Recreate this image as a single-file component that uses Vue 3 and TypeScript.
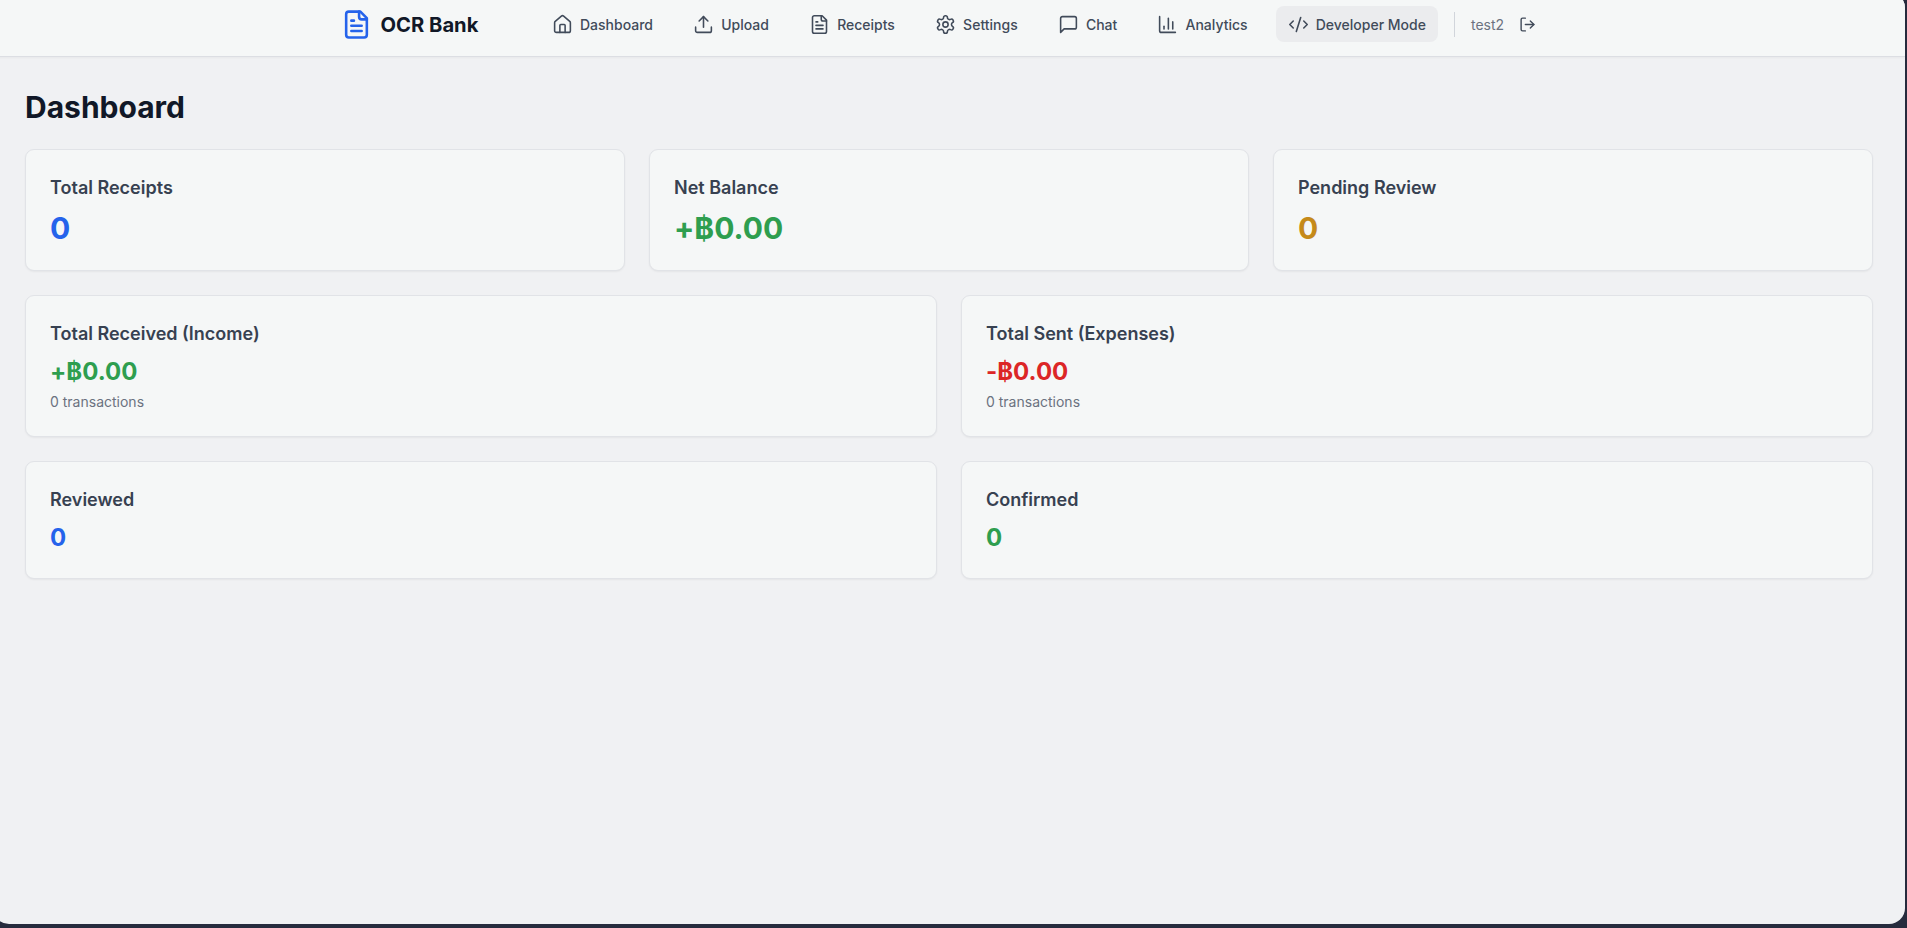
<script setup lang="ts">
interface NavItem {
  label: string
  icon: string[]
  active?: boolean
}

interface Stat {
  label: string
  value: string
  tone: 'blue' | 'green' | 'amber' | 'red'
  note?: string
}

const doc = [
  'M15 2H6a2 2 0 0 0-2 2v16a2 2 0 0 0 2 2h12a2 2 0 0 0 2-2V7Z',
  'M14 2v4a2 2 0 0 0 2 2h4',
  'M10 9H8',
  'M16 13H8',
  'M16 17H8',
]

const navItems: NavItem[] = [
  {
    label: 'Dashboard',
    icon: [
      'M15 21v-8a1 1 0 0 0-1-1h-4a1 1 0 0 0-1 1v8',
      'M3 10a2 2 0 0 1 .709-1.528l7-5.999a2 2 0 0 1 2.582 0l7 5.999A2 2 0 0 1 21 10v9a2 2 0 0 1-2 2H5a2 2 0 0 1-2-2z',
    ],
  },
  { label: 'Upload', icon: ['M12 3v12', 'm17 8-5-5-5 5', 'M21 15v4a2 2 0 0 1-2 2H5a2 2 0 0 1-2-2v-4'] },
  { label: 'Receipts', icon: doc },
  {
    label: 'Settings',
    icon: [
      'M12.22 2h-.44a2 2 0 0 0-2 2v.18a2 2 0 0 1-1 1.73l-.43.25a2 2 0 0 1-2 0l-.15-.08a2 2 0 0 0-2.73.73l-.22.38a2 2 0 0 0 .73 2.73l.15.1a2 2 0 0 1 1 1.72v.51a2 2 0 0 1-1 1.74l-.15.09a2 2 0 0 0-.73 2.73l.22.38a2 2 0 0 0 2.73.73l.15-.08a2 2 0 0 1 2 0l.43.25a2 2 0 0 1 1 1.73V20a2 2 0 0 0 2 2h.44a2 2 0 0 0 2-2v-.18a2 2 0 0 1 1-1.73l.43-.25a2 2 0 0 1 2 0l.15.08a2 2 0 0 0 2.73-.73l.22-.39a2 2 0 0 0-.73-2.73l-.15-.08a2 2 0 0 1-1-1.74v-.5a2 2 0 0 1 1-1.74l.15-.09a2 2 0 0 0 .73-2.73l-.22-.38a2 2 0 0 0-2.73-.73l-.15.08a2 2 0 0 1-2 0l-.43-.25a2 2 0 0 1-1-1.73V4a2 2 0 0 0-2-2z',
      'M15 12a3 3 0 1 1-6 0 3 3 0 0 1 6 0z',
    ],
  },
  { label: 'Chat', icon: ['M21 15a2 2 0 0 1-2 2H7l-4 4V5a2 2 0 0 1 2-2h14a2 2 0 0 1 2 2z'] },
  { label: 'Analytics', icon: ['M3 3v16a2 2 0 0 0 2 2h16', 'M18 17V9', 'M13 17V5', 'M8 17v-3'] },
  { label: 'Developer Mode', icon: ['m18 16 4-4-4-4', 'm6 8-4 4 4 4', 'm14.5 4-5 16'], active: true },
]

const topStats: Stat[] = [
  { label: 'Total Receipts', value: '0', tone: 'blue' },
  { label: 'Net Balance', value: '+฿0.00', tone: 'green' },
  { label: 'Pending Review', value: '0', tone: 'amber' },
]

const midStats: Stat[] = [
  { label: 'Total Received (Income)', value: '+฿0.00', tone: 'green', note: '0 transactions' },
  { label: 'Total Sent (Expenses)', value: '-฿0.00', tone: 'red', note: '0 transactions' },
]

const lowStats: Stat[] = [
  { label: 'Reviewed', value: '0', tone: 'blue' },
  { label: 'Confirmed', value: '0', tone: 'green' },
]
</script>

<template>
  <div class="window">
    <header class="topbar">
      <div class="topbar-inner">
        <div class="brand">
          <svg class="brand-icon" viewBox="0 0 24 24" fill="none" stroke="currentColor" stroke-width="2" stroke-linecap="round" stroke-linejoin="round">
            <path v-for="d in doc" :key="d" :d="d" />
          </svg>
          <span>OCR Bank</span>
        </div>
        <nav class="nav">
          <a v-for="item in navItems" :key="item.label" class="nav-link" :class="{ active: item.active }">
            <svg class="nav-icon" viewBox="0 0 24 24" fill="none" stroke="currentColor" stroke-width="1.8" stroke-linecap="round" stroke-linejoin="round">
              <path v-for="d in item.icon" :key="d" :d="d" />
            </svg>
            {{ item.label }}
          </a>
        </nav>
        <div class="user">
          <span class="username">test2</span>
          <svg class="logout" viewBox="0 0 24 24" fill="none" stroke="currentColor" stroke-width="2" stroke-linecap="round" stroke-linejoin="round">
            <path d="m16 17 5-5-5-5" />
            <path d="M21 12H9" />
            <path d="M9 21H5a2 2 0 0 1-2-2V5a2 2 0 0 1 2-2h4" />
          </svg>
        </div>
      </div>
    </header>

    <main class="content">
      <h1>Dashboard</h1>

      <section class="grid three">
        <div v-for="s in topStats" :key="s.label" class="card">
          <h2>{{ s.label }}</h2>
          <p class="value big" :class="s.tone">{{ s.value }}</p>
        </div>
      </section>

      <section class="grid two">
        <div v-for="s in midStats" :key="s.label" class="card">
          <h2>{{ s.label }}</h2>
          <p class="value" :class="s.tone">{{ s.value }}</p>
          <p class="note">{{ s.note }}</p>
        </div>
      </section>

      <section class="grid two">
        <div v-for="s in lowStats" :key="s.label" class="card">
          <h2>{{ s.label }}</h2>
          <p class="value" :class="s.tone">{{ s.value }}</p>
        </div>
      </section>
    </main>
  </div>
</template>

<style scoped>
.window {
  width: 1912px;
  height: 932px;
  margin: -8px 0 0 -7px;
  background: #f0f1f3;
  border-radius: 0 16px 16px 16px;
  font-family: Inter, "Noto Sans", sans-serif;
  overflow: hidden;
}
.topbar {
  height: 65px;
  padding-top: 8px;
  box-sizing: border-box;
  background: #f5f7f7;
  border-bottom: 1px solid #dcdee3;
  box-shadow: 0 1px 2px rgba(0, 0, 0, 0.04);
}
.topbar-inner {
  display: flex;
  align-items: center;
  height: 48px;
  padding-left: 348px;
}
.brand {
  display: flex;
  align-items: center;
  gap: 8.5px;
  width: 199px;
  font-size: 20.2px;
  font-weight: 700;
  color: #111827;
}
.brand-icon {
  width: 31px;
  height: 31px;
  color: #2563eb;
}
.nav {
  display: flex;
  align-items: center;
  gap: 16.2px;
}
.nav-link {
  display: flex;
  align-items: center;
  gap: 7px;
  height: 36px;
  padding: 0 12px;
  border-radius: 8px;
  font-size: 14px;
  font-weight: 500;
  color: #414b5a;
}
.nav-link.active {
  background: #ebecee;
}
.nav-icon {
  width: 21px;
  height: 21px;
}
.user {
  display: flex;
  align-items: center;
  gap: 15px;
  margin-left: 16px;
  padding-left: 16px;
  height: 25px;
  border-left: 1px solid #d1d5db;
  font-size: 14px;
  color: #6b7280;
}
.logout {
  width: 17px;
  height: 17px;
  color: #414b5a;
}
.content {
  padding: 31px 32px 0;
}
h1 {
  margin: 0 0 23px;
  font-size: 30px;
  line-height: 38px;
  font-weight: 700;
  color: #111827;
}
.grid {
  display: grid;
  gap: 24px;
  margin-bottom: 24px;
}
.three {
  grid-template-columns: repeat(3, 1fr);
}
.two {
  grid-template-columns: repeat(2, 1fr);
}
.card {
  padding: 24px;
  background: #f5f7f7;
  border: 1px solid #e1e3e7;
  border-radius: 9px;
  box-shadow: 0 1px 2px rgba(0, 0, 0, 0.05);
}
h2 {
  margin: 0;
  font-size: 18px;
  line-height: 28px;
  font-weight: 600;
  color: #374151;
}
.value {
  margin: 8px 0 0;
  font-size: 24px;
  line-height: 32px;
  font-weight: 700;
}
.value.big {
  font-size: 30px;
  line-height: 36px;
}
.note {
  margin: 4px 0 0;
  font-size: 14px;
  line-height: 20px;
  color: #6b7280;
}
.blue {
  color: #2563eb;
}
.green {
  color: #2e9e4f;
}
.amber {
  color: #c58a1a;
}
.red {
  color: #dc2626;
}
</style>

<style>
html,
body {
  background: #262b3d;
  overflow: hidden;
}
</style>
